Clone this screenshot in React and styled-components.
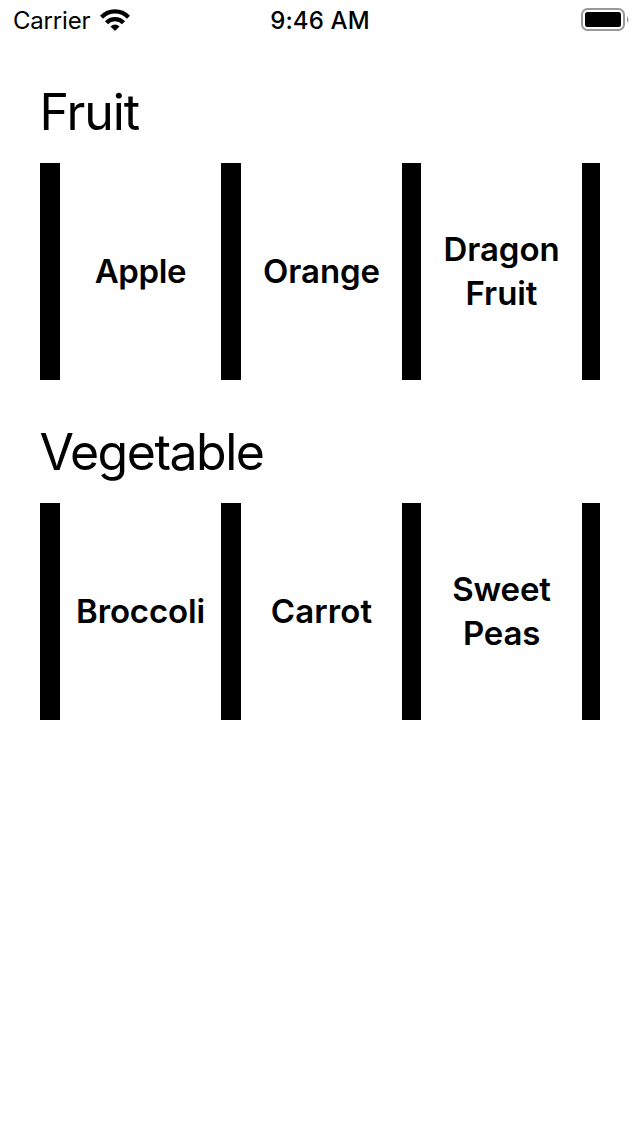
import React from 'react';
import styled, { createGlobalStyle } from 'styled-components';

const GlobalStyle = createGlobalStyle`
  * { box-sizing: border-box; }
  body {
    margin: 0;
    background: #fff;
    color: #000;
    font-family: Inter, 'Liberation Sans', sans-serif;
  }
`;

const Screen = styled.div`
  width: 640px;
  height: 1136px;
  overflow: hidden;
`;

const StatusBar = styled.header`
  display: grid;
  grid-template-columns: 1fr auto 1fr;
  align-items: center;
  height: 40px;
  padding: 0 11px;
`;

const Carrier = styled.div`
  display: flex;
  align-items: center;
  gap: 10px;
  padding-left: 2px;
  font-size: 24px;
  letter-spacing: -0.2px;
`;

const Time = styled.time`
  font-size: 24px;
  font-weight: 550;
  letter-spacing: 0.15px;
`;

const Battery = styled.svg`
  justify-self: end;
`;

const Content = styled.main`
  display: flex;
  flex-direction: column;
  gap: 40px;
  padding: 42px 40px 0;
`;

const Section = styled.section`
  height: 300px;
`;

const Title = styled.h2`
  margin: 0;
  height: 81px;
  font-size: 50px;
  line-height: 60px;
  font-weight: 400;
  text-indent: -0.5px;
  letter-spacing: ${({ $spacing }) => $spacing}px;
`;

const Shelf = styled.div`
  display: grid;
  grid-template-columns: 181px 181px 180px 18px;
  height: 217px;
  overflow: hidden;
`;

const Card = styled.article`
  display: flex;
  align-items: center;
  justify-content: center;
  padding-bottom: 1px;
  border-left: ${({ $bar }) => $bar}px solid #000;
  text-align: center;
  white-space: pre-line;
  font-size: 33px;
  line-height: 44px;
  font-weight: 570;
  letter-spacing: ${({ $spacing }) => $spacing}px;
`;

const EndBar = styled.div`
  background: #000;
`;

const sections = [
  {
    title: 'Fruit',
    spacing: -1.1,
    items: [
      { label: 'Apple', spacing: -0.35, bar: 20 },
      { label: 'Orange', spacing: -0.05, bar: 20 },
      { label: 'Dragon\nFruit', spacing: -0.05, bar: 19 },
    ],
  },
  {
    title: 'Vegetable',
    spacing: -1.5,
    items: [
      { label: 'Broccoli', spacing: -0.15, bar: 20 },
      { label: 'Carrot', spacing: 0.1, bar: 20 },
      { label: 'Sweet\nPeas', spacing: -0.2, bar: 19 },
    ],
  },
];

export default function App() {
  return (
    <Screen>
      <GlobalStyle />
      <StatusBar>
        <Carrier>
          Carrier
          <svg width="30" height="22" viewBox="0 0 30 22" fill="none" stroke="#000" strokeWidth="4.300">
            <path d="M1.500 8.200C9 0.400 21 0.400 28.500 8.200M6.500 13.700C11 8.900 19 8.900 23.500 13.700" />
            <path d="M15 22L10.500 17.500Q15 13.500 19.500 17.500Z" fill="#000" stroke="none" />
          </svg>
        </Carrier>
        <Time>9:46 AM</Time>
        <Battery width="48" height="24" viewBox="0 0 48 24">
          <rect x="1" y="1" width="42" height="21" rx="5.500" fill="none" stroke="#999" strokeWidth="2" />
          <rect x="4" y="4" width="36" height="15" rx="2.500" />
          <path d="M46 8Q49 11.500 46 15Z" fill="#999" />
        </Battery>
      </StatusBar>
      <Content>
        {sections.map(({ title, spacing, items }) => (
          <Section key={title}>
            <Title $spacing={spacing}>{title}</Title>
            <Shelf>
              {items.map((item) => (
                <Card key={item.label} $spacing={item.spacing} $bar={item.bar}>{item.label}</Card>
              ))}
              <EndBar />
            </Shelf>
          </Section>
        ))}
      </Content>
    </Screen>
  );
}
